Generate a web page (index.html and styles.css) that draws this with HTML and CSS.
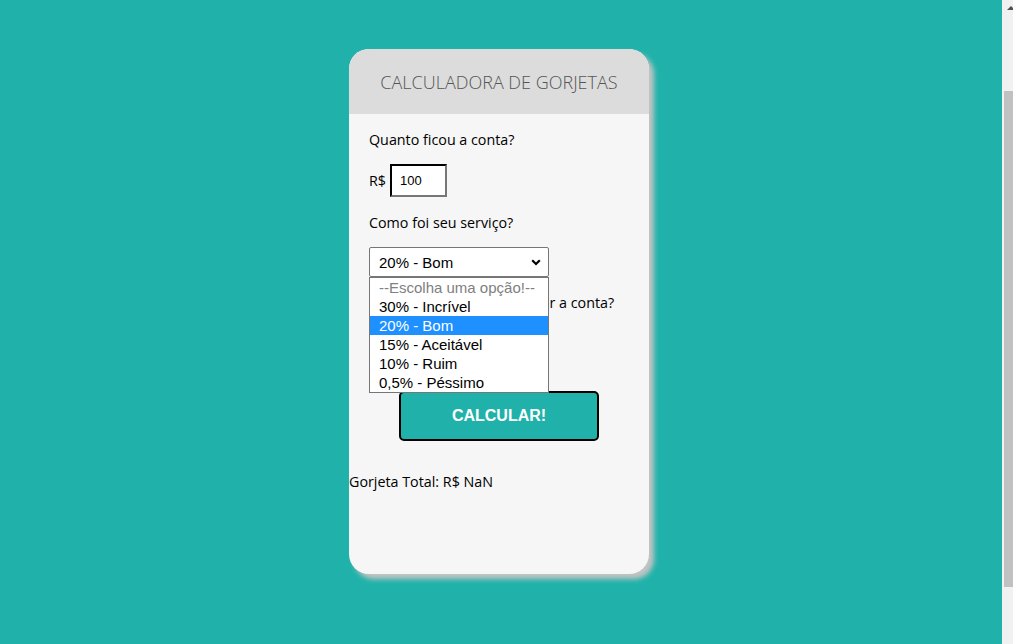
FILE: index.html
```html
<!DOCTYPE html>
<html lang="pt-BR">
<head>
<meta charset="utf-8">
<title>Calculadora de Gorjetas</title>
<link rel="stylesheet" href="styles.css">
</head>
<body>
<div class="page">
  <main class="main">
    <div class="card">
      <header class="card-header">
        <h1 class="title">CALCULADORA DE GORJETAS</h1>
      </header>
      <div class="card-body">
        <p class="label">Quanto ficou a conta?</p>
        <div class="money-row">
          <span class="currency">R$</span>
          <input class="num-input" type="text" value="100">
        </div>
        <p class="label">Como foi seu serviço?</p>
        <div class="select-wrap">
          <div class="select">
            <span>20% - Bom</span>
            <svg class="chevron" width="10" height="7" viewBox="0 0 10 7"><path d="M1.2 1.2 L5 5 L8.8 1.2" fill="none" stroke="#000" stroke-width="2.2"/></svg>
          </div>
          <ul class="options">
            <li class="opt placeholder">--Escolha uma opção!--</li>
            <li class="opt">30% - Incrível</li>
            <li class="opt selected">20% - Bom</li>
            <li class="opt">15% - Aceitável</li>
            <li class="opt">10% - Ruim</li>
            <li class="opt">0,5% - Péssimo</li>
          </ul>
        </div>
        <p class="label">Quantas pessoas vão dividir a conta?</p>
        <div class="people-row">
          <input class="num-input" type="text" value="">
        </div>
        <div class="btn-row">
          <button class="btn">CALCULAR!</button>
        </div>
      </div>
      <p class="total">Gorjeta Total: R$ NaN</p>
    </div>
  </main>
  <div class="scrollbar">
    <div class="arrow-up"></div>
    <div class="thumb"></div>
  </div>
</div>
</body>
</html>
```
FILE: styles.css
```css
html, body {
  margin: 0;
  padding: 0;
  height: 100%;
  overflow: hidden;
}
body {
  font-family: "Open Sans", "Noto Sans", sans-serif;
  background: #20b2aa;
}
.page {
  display: flex;
  height: 644px;
}
.main {
  flex: 1;
  display: flex;
  justify-content: center;
  align-items: flex-start;
  padding: 49px 4px 0 0;
  background: #20b2aa;
}
.card {
  width: 300px;
  height: 525px;
  background: #f6f6f6;
  border-radius: 20px;
  box-shadow: 5px 5px 5px #c4c4c4;
  display: flex;
  flex-direction: column;
}
.card-header {
  height: 65px;
  background: #dcdcdc;
  border-radius: 20px 20px 0 0;
  display: flex;
  align-items: center;
  justify-content: center;
}
.title {
  margin: 0;
  font-size: 18px;
  font-weight: 300;
  color: #555;
  letter-spacing: 0;
}
.card-body {
  padding: 16px 20px 0 20px;
  display: flex;
  flex-direction: column;
}
.label {
  margin: 0;
  font-size: 14.3px;
  line-height: 20px;
  color: #000;
}
.money-row {
  display: flex;
  align-items: center;
  gap: 4px;
  margin: 14px 0 16px;
  font-size: 14.3px;
}
.currency {
  line-height: 20px;
}
.num-input {
  box-sizing: border-box;
  width: 57px;
  height: 33px;
  border: 2px inset #767676;
  border-color: #222 #777 #777 #222;
  padding: 0 8px;
  font-family: "Liberation Sans", Arial, sans-serif;
  font-size: 13px;
  background: #fff;
  color: #000;
}
.select-wrap {
  position: relative;
  width: 180px;
  margin: 14px 0 16px;
}
.select {
  box-sizing: border-box;
  height: 30px;
  border: 1px solid #767676;
  border-radius: 2px;
  background: #fff;
  display: flex;
  align-items: center;
  justify-content: space-between;
  padding: 0 7px 0 9px;
  font-family: "Liberation Sans", Arial, sans-serif;
  font-size: 15px;
  color: #000;
}
.options {
  position: absolute;
  top: 30px;
  left: 0;
  width: 180px;
  box-sizing: border-box;
  margin: 0;
  padding: 0;
  list-style: none;
  background: #fff;
  border: 1px solid #767676;
  z-index: 5;
}
.opt {
  height: 19px;
  line-height: 19px;
  padding-left: 9px;
  font-family: "Liberation Sans", Arial, sans-serif;
  font-size: 15px;
  color: #000;
}
.opt.placeholder {
  color: #808080;
}
.opt.selected {
  background: #1e90ff;
  color: #fff;
}
.people-row {
  display: flex;
  align-items: center;
  margin: 16px 0 29px;
}
.btn-row {
  display: flex;
  justify-content: center;
}
.btn {
  box-sizing: border-box;
  width: 200px;
  height: 50px;
  background: #20b2aa;
  border: 2px solid #000;
  border-radius: 5px;
  color: #fff;
  font-family: "Liberation Sans", Arial, sans-serif;
  font-weight: bold;
  font-size: 16px;
}
.total {
  margin: 31px 0 0;
  font-size: 14.3px;
  line-height: 20px;
  color: #000;
}
.scrollbar {
  width: 11px;
  background: #f1f1f1;
  display: flex;
  flex-direction: column;
  align-items: flex-end;
}
.arrow-up {
  width: 0;
  height: 0;
  margin: 6px -2px 0 0;
  border-left: 4px solid transparent;
  border-right: 4px solid transparent;
  border-bottom: 4px solid #505050;
}
.thumb {
  width: 9px;
  height: 496px;
  margin-top: 81px;
  background: #c1c1c1;
}
```
